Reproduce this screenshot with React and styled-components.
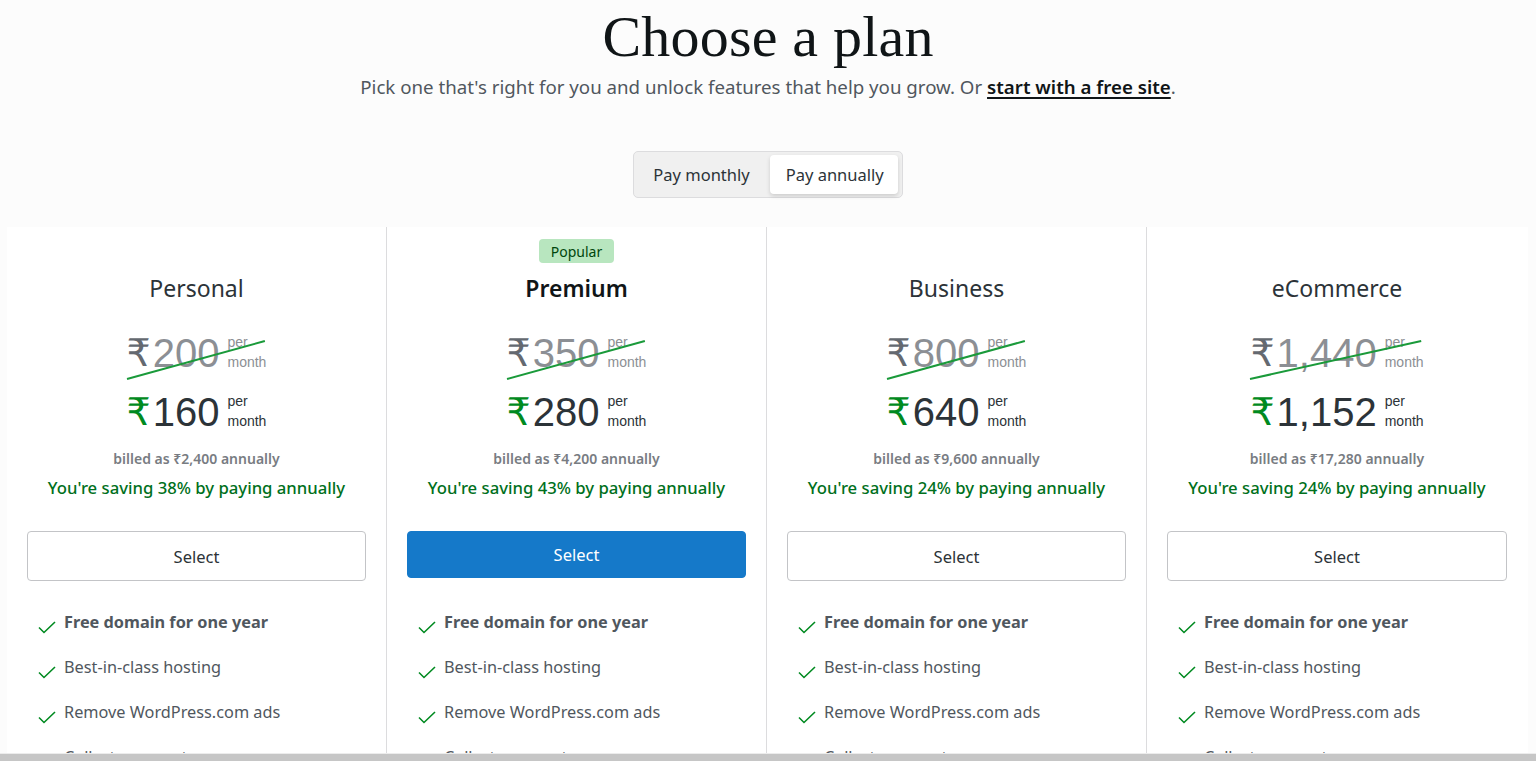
import React, { useState } from "react";
import styled, { createGlobalStyle } from "styled-components";

const GlobalStyle = createGlobalStyle`
  html, body {
    margin: 0;
    padding: 0;
    background: #fcfcfc;
    overflow: hidden;
  }
  body {
    font-family: "Noto Sans", "Open Sans", sans-serif;
    color: #2c3338;
  }
  * {
    box-sizing: border-box;
  }
`;

const plans = [
  {
    name: "Personal",
    oldPrice: "200",
    price: "160",
    billed: "₹2,400",
    saving: "38%",
  },
  {
    name: "Premium",
    oldPrice: "350",
    price: "280",
    billed: "₹4,200",
    saving: "43%",
    popular: true,
  },
  {
    name: "Business",
    oldPrice: "800",
    price: "640",
    billed: "₹9,600",
    saving: "24%",
  },
  {
    name: "eCommerce",
    oldPrice: "1,440",
    price: "1,152",
    billed: "₹17,280",
    saving: "24%",
  },
];

const features = [
  { text: "Free domain for one year", bold: true },
  { text: "Best-in-class hosting" },
  { text: "Remove WordPress.com ads" },
  { text: "Collect payments" },
  { text: "Unlimited email support" },
];

export default function App() {
  const [annual, setAnnual] = useState(true);

  return (
    <Page>
      <GlobalStyle />
      <Header>
        <Title>Choose a plan</Title>
        <Subtitle>
          Pick one that's right for you and unlock features that help you
          grow. Or <a href="#free">start with a free site</a>.
        </Subtitle>
      </Header>

      <ToggleWrap>
        <Toggle>
          <ToggleButton active={!annual} onClick={() => setAnnual(false)}>
            Pay monthly
          </ToggleButton>
          <ToggleButton active={annual} onClick={() => setAnnual(true)}>
            Pay annually
          </ToggleButton>
        </Toggle>
      </ToggleWrap>

      <Grid>
        {plans.map((plan) => (
          <Card key={plan.name}>
            <BadgeSlot>{plan.popular && <Badge>Popular</Badge>}</BadgeSlot>
            <PlanName strong={plan.popular}>{plan.name}</PlanName>

            <PriceRow old>
              <Rupee old>₹</Rupee>
              <Amount old>{plan.oldPrice}</Amount>
              <Per old>
                per
                <br />
                month
              </Per>
              <Strike viewBox="0 0 100 40" preserveAspectRatio="none">
                <line
                  x1="0"
                  y1="39"
                  x2="100"
                  y2="1"
                  stroke="#1a9a3a"
                  strokeWidth="2"
                  vectorEffect="non-scaling-stroke"
                />
              </Strike>
            </PriceRow>

            <PriceRow>
              <Rupee>₹</Rupee>
              <Amount>{plan.price}</Amount>
              <Per>
                per
                <br />
                month
              </Per>
            </PriceRow>

            <Billed>billed as {plan.billed} annually</Billed>
            <Saving>You're saving {plan.saving} by paying annually</Saving>

            <SelectButton primary={plan.popular}>Select</SelectButton>

            <FeatureList>
              {features.map((f) => (
                <Feature key={f.text} bold={f.bold}>
                  <CheckIcon viewBox="0 0 18 14">
                    <polyline
                      points="1,7.5 6,12.5 17,2"
                      fill="none"
                      stroke="#008a20"
                      strokeWidth="1.6"
                    />
                  </CheckIcon>
                  <span>{f.text}</span>
                </Feature>
              ))}
            </FeatureList>
          </Card>
        ))}
      </Grid>
      <ScrollBar />
    </Page>
  );
}

const Page = styled.div`
  min-height: 100vh;
`;

const Header = styled.header`
  text-align: center;
`;

const Title = styled.h1`
  margin: 0;
  font-family: "Liberation Serif", "DejaVu Serif", serif;
  font-weight: 400;
  font-size: 58px;
  line-height: 74px;
  color: #101517;
  letter-spacing: 0.2px;
`;

const Subtitle = styled.p`
  margin: 0;
  font-size: 18.7px;
  line-height: 26px;
  color: #50575e;

  a {
    color: #101517;
    font-weight: 600;
    text-decoration: underline;
    text-decoration-thickness: 2px;
    text-underline-offset: 3px;
  }
`;

const ToggleWrap = styled.div`
  display: flex;
  justify-content: center;
  margin-top: 51px;
`;

const Toggle = styled.div`
  display: flex;
  align-items: center;
  gap: 6px;
  height: 47px;
  padding: 3px 4px 3px 3px;
  background: #f0f0f0;
  border: 1px solid #dcdcde;
  border-radius: 5px;
`;

const ToggleButton = styled.button`
  height: 39px;
  padding: 0 14px 0 16px;
  border: none;
  border-radius: 4px;
  font-family: inherit;
  font-size: 16.5px;
  color: #2c3338;
  cursor: pointer;
  background: ${(p) => (p.active ? "#fff" : "transparent")};
  box-shadow: ${(p) => (p.active ? "0 2px 4px rgba(0,0,0,0.15)" : "none")};
`;

const Grid = styled.div`
  display: grid;
  grid-template-columns: repeat(4, 380px);
  margin: 29px 0 0 7px;
  width: 1521px;
  background: #fff;
`;

const Card = styled.div`
  display: flex;
  flex-direction: column;
  align-items: center;
  padding: 12px 20px 0;
  border-right: 1px solid #dcdcde;

  &:last-child {
    border-right: none;
  }
`;

const BadgeSlot = styled.div`
  height: 24px;
  display: flex;
  justify-content: center;
`;

const Badge = styled.span`
  display: inline-flex;
  align-items: center;
  height: 24px;
  padding: 0 12px;
  background: #b8e6bf;
  color: #00450c;
  border-radius: 4px;
  font-size: 14px;
`;

const PlanName = styled.h2`
  margin: 9px 0 0;
  font-size: 23px;
  line-height: 32px;
  font-weight: ${(p) => (p.strong ? 600 : 400)};
  color: ${(p) => (p.strong ? "#101517" : "#2c3338")};
`;

const PriceRow = styled.div`
  position: relative;
  display: flex;
  align-items: flex-start;
  margin-top: ${(p) => (p.old ? "28px" : "17px")};
  height: 42px;
  font-family: "Liberation Sans", Arial, sans-serif;
`;

const Rupee = styled.span`
  font-family: "DejaVu Sans", "Noto Sans", sans-serif;
  font-size: 38px;
  line-height: 42px;
  color: ${(p) => (p.old ? "#646970" : "#008a20")};
  margin-right: 2px;
`;

const Amount = styled.span`
  font-size: 40px;
  line-height: 42px;
  color: ${(p) => (p.old ? "#8c8f94" : "#2c3338")};
`;

const Per = styled.span`
  margin: 0 0 0 8px;
  font-size: 14px;
  line-height: 20px;
  text-align: left;
  color: ${(p) => (p.old ? "#8c8f94" : "#2c3338")};
`;

const Strike = styled.svg`
  position: absolute;
  left: 0;
  top: 8px;
  height: 40px;
  width: calc(100% - 2px);
  overflow: visible;
`;

const Billed = styled.div`
  margin-top: 17px;
  font-size: 14px;
  line-height: 18px;
  font-weight: 600;
  color: #787c82;
`;

const Saving = styled.div`
  margin-top: 9px;
  font-size: 16.7px;
  line-height: 22px;
  font-weight: 500;
  color: #00701c;
`;

const SelectButton = styled.button`
  margin-top: 32px;
  margin-bottom: ${(p) => (p.primary ? "3px" : "0")};
  width: 100%;
  height: ${(p) => (p.primary ? "47px" : "50px")};
  border-radius: 4px;
  border: 1px solid ${(p) => (p.primary ? "#1579c9" : "#c3c4c7")};
  background: ${(p) => (p.primary ? "#1579c9" : "#fff")};
  color: ${(p) => (p.primary ? "#fff" : "#2c3338")};
  font-family: inherit;
  font-size: 16.5px;
  cursor: pointer;
`;

const FeatureList = styled.ul`
  align-self: stretch;
  list-style: none;
  margin: 30px 0 0;
  padding: 0 0 0 11px;
`;

const Feature = styled.li`
  display: flex;
  align-items: flex-start;
  gap: 8px;
  height: 45px;
  font-size: 16.3px;
  line-height: 22px;
  color: #50575e;
  font-weight: ${(p) => (p.bold ? 700 : 400)};
`;

const CheckIcon = styled.svg`
  flex: none;
  width: 18px;
  height: 14px;
  margin-top: 9px;
`;

const ScrollBar = styled.div`
  position: fixed;
  left: 0;
  right: 0;
  bottom: 0;
  height: 8px;
  background: #c6c6c6;
  border-top: 1px solid #ececec;
`;
